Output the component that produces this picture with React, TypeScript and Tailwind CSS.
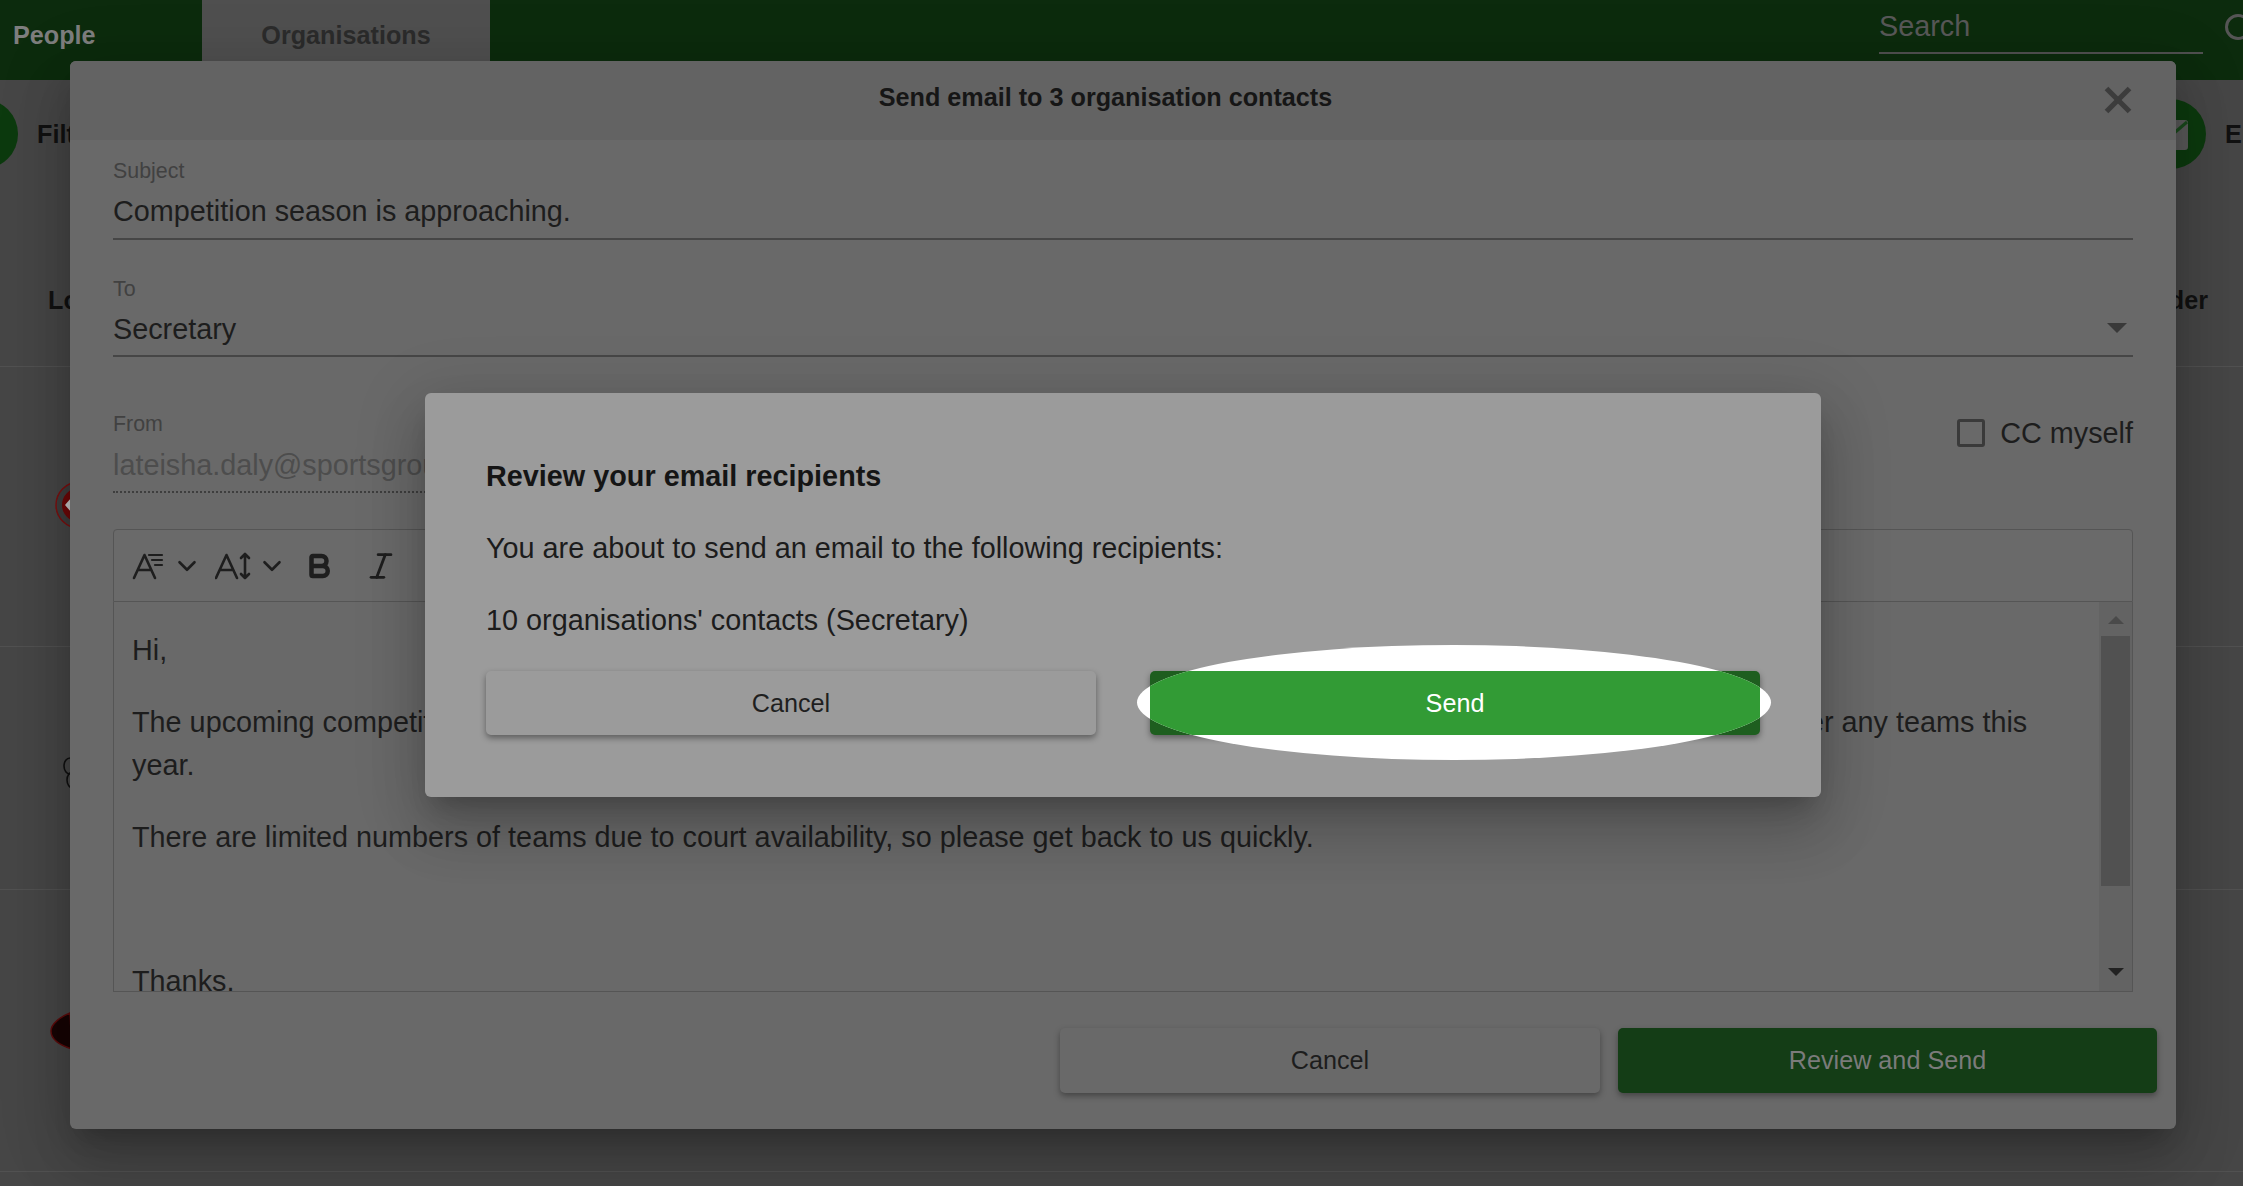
import { Bold, Italic, ChevronDown, X } from "lucide-react";

const font = "font-['Liberation_Sans',Arial,sans-serif]";

function Field({ label, value, gap, arrow }: { label: string; value: string; gap: string; arrow?: boolean }) {
  return (
    <div className="relative border-b-2 border-[#464646] pb-[4px]">
      <div className="h-[24px] text-[21.4px] leading-[24px] text-[#414141]">{label}</div>
      <div className={`h-[44px] text-[28.8px] leading-[42px] text-[#1d1d1d] ${gap}`}>{value}</div>
      {arrow && (
        <div className="absolute right-[6px] top-[46px] h-0 w-0 border-x-[10px] border-t-[10px] border-x-transparent border-t-[#393939]" />
      )}
    </div>
  );
}

function FontStyleIcon() {
  return (
    <svg width="32" height="28" viewBox="0 0 32 28" fill="none" stroke="#1e1e1e" strokeWidth="2.6" strokeLinecap="round" strokeLinejoin="round">
      <path d="M2 26 12.5 3 23 26M6 18h13" />
      <path d="M17 3h13M20 8h10M23 13h7" strokeWidth="2.2" />
    </svg>
  );
}

function FontSizeIcon() {
  return (
    <svg width="36" height="28" viewBox="0 0 36 28" fill="none" stroke="#1e1e1e" strokeWidth="2.6" strokeLinecap="round" strokeLinejoin="round">
      <path d="M1 26 11.5 3 22 26M5 18h13" />
      <path d="M30 2v24M26 6l4-4 4 4M26 22l4 4 4-4" />
    </svg>
  );
}

function OuterPage() {
  return (
    <div className="flex h-full flex-col bg-[#464646]">
      <div className="flex h-[80px] bg-[#0c2b0d]">
        <div className="h-full w-[202px] shrink-0 pl-[13px] pt-[20px] text-[25.2px] font-bold leading-[30px] text-[#7e7e7e]">People</div>
        <div className="h-full w-[288px] shrink-0 bg-[#4f4f4f] pt-[20px] text-center text-[25.2px] font-bold leading-[30px] text-[#2b2b2b]">Organisations</div>
        <div className="ml-[1389px] h-[54px] w-[324px] shrink-0 border-b-2 border-[#505050] text-[28.8px] leading-[52px] text-[#585858]">Search</div>
        <div className="ml-[22px] mt-[14px] h-[26px] w-[26px] shrink-0 rounded-full border-[3px] border-[#555]" />
      </div>
      <div className="flex h-[120px] items-start">
        <div className="ml-[-52px] mt-[19px] h-[70px] w-[70px] shrink-0 rounded-full bg-[#0c3a0e]" />
        <div className="ml-[19px] mt-[39px] text-[25.2px] font-bold leading-[30px] text-[#111]">Filter</div>
        <div className="flex-1" />
        <div className="relative mt-[19px] h-[70px] w-[70px] shrink-0 rounded-full bg-[#0c3a0e]">
          <div className="absolute left-[24px] top-[21px] h-[30px] w-[28px] rounded-[3px] bg-[#5a5a5a]" />
          <svg className="absolute left-[34px] top-[21px]" width="18" height="16" viewBox="0 0 18 16" fill="none" stroke="#1a4a1c" strokeWidth="3">
            <path d="M3 14 17 2" />
          </svg>
        </div>
        <div className="ml-[19px] mt-[39px] w-[18px] shrink-0 overflow-hidden text-[25.2px] font-bold leading-[30px] text-[#111]">Email</div>
      </div>
      <div className="flex h-[167px] items-start justify-between border-b border-[#515151] pl-[48px] pr-[35px] pt-[85px] text-[25.2px] font-bold leading-[30px] text-[#111]">
        <span>Logo</span>
        <span>Order</span>
      </div>
      <div className="relative h-[280px] border-b border-[#515151]">
        <svg className="absolute left-[54px] top-[114px]" width="30" height="48" viewBox="0 0 30 48">
          <circle cx="25" cy="24" r="23" fill="#3e3e3e" stroke="#7c1010" strokeWidth="1.5" />
          <circle cx="25" cy="24" r="17" fill="#6e0808" />
          <path d="M11 24l6-7 6 7-6 7z" fill="#c8c8c8" />
        </svg>
      </div>
      <div className="relative h-[243px] border-b border-[#515151]">
        <svg className="absolute left-[62px] top-[108px]" width="10" height="34" viewBox="0 0 10 34" fill="none" stroke="#111" strokeWidth="1.6">
          <ellipse cx="8" cy="11" rx="6" ry="8" />
          <ellipse cx="11" cy="25" rx="6" ry="8" />
        </svg>
      </div>
      <div className="relative h-[282px] border-b border-[#515151]">
        <svg className="absolute left-[50px] top-[122px]" width="22" height="38" viewBox="0 0 22 38">
          <path d="M20 1C10 5 1 12 1 19c0 8 8 14 21 18z" fill="#170505" stroke="#5c0c0c" strokeWidth="1.5" />
        </svg>
      </div>
      <div className="flex-1" />
    </div>
  );
}

function Scrollbar() {
  return (
    <div className="flex w-[33px] shrink-0 flex-col items-center bg-[#636363] px-[2px]">
      <div className="mt-[14px] h-0 w-0 border-x-[8px] border-b-[8px] border-x-transparent border-b-[#4a4a4a]" />
      <div className="mt-[12px] h-[250px] w-full shrink-0 bg-[#515151]" />
      <div className="mt-[82px] h-0 w-0 border-x-[8px] border-t-[8px] border-x-transparent border-t-[#222]" />
    </div>
  );
}

function EmailModal() {
  return (
    <div className="absolute left-[70px] top-[61px] flex h-[1068px] w-[2106px] flex-col rounded-[6px] bg-[#696969] shadow-[0_16px_22px_-10px_rgba(0,0,0,0.2),0_34px_54px_4px_rgba(0,0,0,0.14),0_13px_66px_11px_rgba(0,0,0,0.12)]">
      <div className="relative flex h-[79px] items-center justify-center rounded-t-[6px] bg-[#636363] pb-[6px] pr-[35px] text-[25.2px] font-bold text-[#161616]">
        Send email to 3 organisation contacts
        <X className="absolute right-[35px] top-[16px] text-[#3c3c3c]" size={46} strokeWidth={2.7} strokeLinecap="butt" />
      </div>
      <div className="flex flex-col px-[43px]">
        <div className="mt-[19px]"><Field label="Subject" value="Competition season is approaching." gap="mt-[7px]" /></div>
        <div className="mt-[37px]"><Field label="To" value="Secretary" gap="relative top-[1px] mt-[6px]" arrow /></div>
        <div className="mt-[54px] flex items-start justify-between">
          <div className="w-[1000px] border-b-2 border-dotted border-[#3e3e3e] pb-[4px]">
            <div className="mt-[1px] h-[23px] text-[21.4px] leading-[24px] text-[#414141]">From</div>
            <div className="mt-[8px] h-[44px] text-[28.8px] leading-[44px] text-[#4d4d4d]">lateisha.daly@sportsgroup.com</div>
          </div>
          <div className="flex items-center gap-[15px]">
            <div className="h-[28px] w-[28px] rounded-[3px] border-[3px] border-[#3a3a3a]" />
            <span className="text-[28.8px] leading-[44px] text-[#1d1d1d]">CC myself</span>
          </div>
        </div>
        <div className="mt-[36px] flex h-[73px] items-center rounded-t-[4px] border border-[#555] bg-[#6a6a6a] pl-[18px]">
          <FontStyleIcon />
          <ChevronDown className="ml-[8px] text-[#1e1e1e]" size={30} strokeWidth={2.1} />
          <div className="ml-[13px]"><FontSizeIcon /></div>
          <ChevronDown className="ml-[6px] text-[#1e1e1e]" size={30} strokeWidth={2.1} />
          <Bold className="ml-[17px] text-[#1e1e1e]" size={30} strokeWidth={3.6} />
          <Italic className="ml-[30px] text-[#1e1e1e]" size={34} strokeWidth={2} />
        </div>
        <div className="flex h-[390px] overflow-hidden border-x border-b border-[#555] pl-[18px]">
          <div className="flex-1 overflow-hidden pr-[58px] pt-[27px] text-[28.8px] leading-[43.6px] text-[#1d1d1d]">
            <p>Hi,</p>
            <p className="mt-[28px]">The upcoming competition season is nearly here for all teams. Please let us know as soon as you can whether you would like to enter any teams this year.</p>
            <p className="mt-[28px]">There are limited numbers of teams due to court availability, so please get back to us quickly.</p>
            <p className="mt-[28px]">&nbsp;</p>
            <p className="mt-[29px]">Thanks,</p>
          </div>
          <Scrollbar />
        </div>
      </div>
      <div className="flex justify-end gap-[18px] px-[19px] pt-[36px]">
        <button className="h-[65px] w-[540px] rounded-[5px] bg-[#696969] text-[25.2px] text-[#1d1d1d] shadow-[0_3px_6px_rgba(0,0,0,0.35)]">Cancel</button>
        <button className="h-[65px] w-[539px] rounded-[5px] bg-[#143d16] text-[25.2px] text-[#7b7b7b] shadow-[0_3px_6px_rgba(0,0,0,0.35)]">Review and Send</button>
      </div>
    </div>
  );
}

function ReviewDialog() {
  return (
    <div className="absolute left-[425px] top-[393px] h-[404px] w-[1396px] rounded-[6px] bg-[#9b9b9b] px-[61px] pt-[65px] shadow-[0_16px_22px_-10px_rgba(0,0,0,0.2),0_34px_54px_4px_rgba(0,0,0,0.14),0_13px_66px_11px_rgba(0,0,0,0.12)]">
      <div className="text-[28.8px] font-bold leading-[36px] text-[#151515]">Review your email recipients</div>
      <div className="mt-[36px] text-[28.8px] leading-[36px] text-[#1c1c1c]">You are about to send an email to the following recipients:</div>
      <div className="mt-[36px] text-[28.8px] leading-[36px] text-[#1c1c1c]">10 organisations' contacts (Secretary)</div>
      <div className="mt-[33px] flex gap-[54px]">
        <button className="h-[64px] w-[610px] rounded-[5px] bg-[#9b9b9b] pt-[2px] text-[25.2px] text-[#1f1f1f] shadow-[0_3px_6px_rgba(0,0,0,0.4)]">Cancel</button>
        <div className="relative h-[64px] w-[610px] rounded-[5px] bg-[#1e5e1f] shadow-[0_3px_6px_rgba(0,0,0,0.4)]">
          <div className="absolute left-[-13px] top-[-26px] h-[115px] w-[634px] overflow-hidden rounded-[50%] bg-white">
            <button className="absolute left-[13px] top-[26px] h-[64px] w-[610px] bg-[#329b35] pt-[2px] text-[25.2px] text-white">Send</button>
          </div>
        </div>
      </div>
    </div>
  );
}

export default function App() {
  return (
    <div className={`relative h-[1186px] w-[2243px] overflow-hidden ${font}`}>
      <OuterPage />
      <EmailModal />
      <ReviewDialog />
    </div>
  );
}
